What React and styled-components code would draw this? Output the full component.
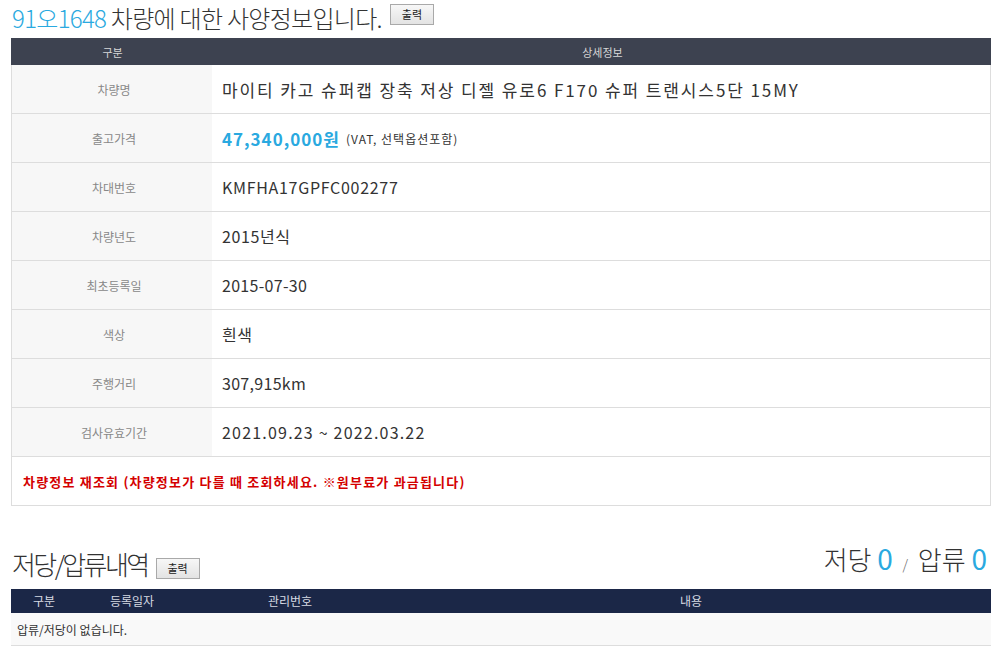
import React from "react";
import styled, { createGlobalStyle } from "styled-components";

const GlobalStyle = createGlobalStyle`
  body {
    margin: 0;
    background: #fff;
    font-family: "Noto Sans CJK KR", "Noto Sans", sans-serif;
    color: #333;
  }
`;

const specs = [
  { label: "차량명", value: "마이티 카고 슈퍼캡 장축 저상 디젤 유로6 F170 슈퍼 트랜시스5단 15MY", size: 17, ls: 1.9 },
  { label: "출고가격", price: "47,340,000원", note: "(VAT, 선택옵션포함)" },
  { label: "차대번호", value: "KMFHA17GPFC002277", ls: 0.7 },
  { label: "차량년도", value: "2015년식", ls: 0.6 },
  { label: "최초등록일", value: "2015-07-30", ls: 0.3 },
  { label: "색상", value: "흰색", ls: 0.6 },
  { label: "주행거리", value: "307,915km", ls: 0.3 },
  { label: "검사유효기간", value: "2021.09.23 ~ 2022.03.22", ls: 1.2 },
];

const Page = () => {
  return (
    <Wrapper>
      <GlobalStyle />
      <TitleRow>
        <Title>
          <Blue>91오1648</Blue> 차량에 대한 사양정보입니다.
        </Title>
        <PrintButton $top={4}>출력</PrintButton>
      </TitleRow>

      <SpecTable>
        <HeadRow>
          <HeadCell>구분</HeadCell>
          <HeadCell>상세정보</HeadCell>
        </HeadRow>
        {specs.map((row) => (
          <SpecRow key={row.label}>
            <Label>{row.label}</Label>
            <Value $size={row.size || 16} $ls={row.ls || 0}>
              {row.price ? (
                <>
                  <Price>{row.price}</Price>
                  <Note>{row.note}</Note>
                </>
              ) : (
                row.value
              )}
            </Value>
          </SpecRow>
        ))}
        <NoticeRow>차량정보 재조회 (차량정보가 다를 때 조회하세요. ※원부료가 과금됩니다)</NoticeRow>
      </SpecTable>

      <SectionHead>
        <TitleRow>
          <SubTitle>저당/압류내역</SubTitle>
          <PrintButton $top={14}>출력</PrintButton>
        </TitleRow>
        <Counts>
          저당 <Count>0</Count> <Slash>/</Slash> 압류 <Count>0</Count>
        </Counts>
      </SectionHead>

      <LienTable>
        <LienHead>
          <LienCol $w={77}>구분</LienCol>
          <LienCol $w={158}>등록일자</LienCol>
          <LienCol $w={412}>관리번호</LienCol>
          <LienCol>내용</LienCol>
        </LienHead>
        <EmptyRow>압류/저당이 없습니다.</EmptyRow>
      </LienTable>
    </Wrapper>
  );
};

const Wrapper = styled.div`
  width: 980px;
  padding: 0 11px;
`;

const TitleRow = styled.div`
  display: flex;
  align-items: flex-start;
  gap: 8px;
`;

const Title = styled.h1`
  margin: 0;
  font-size: 24px;
  font-weight: 300;
  letter-spacing: -0.7px;
  line-height: 36px;
  color: #333;
  padding-left: 1px;
`;

const Blue = styled.span`
  color: #2aa9e0;
`;

const PrintButton = styled.button`
  margin-top: ${(p) => p.$top}px;
  width: 44px;
  height: 21px;
  padding: 0;
  border: 1px solid #a9a9a9;
  background: linear-gradient(#f7f7f7, #e3e3e3);
  font-family: "Noto Sans CJK KR", sans-serif;
  font-size: 11px;
  color: #222;
  line-height: 19px;
`;

const SpecTable = styled.div`
  margin-top: 2px;
  border-left: 1px solid #ddd;
  border-right: 1px solid #ddd;
  border-bottom: 1px solid #ddd;
`;

const HeadRow = styled.div`
  display: grid;
  grid-template-columns: 203px 1fr;
  height: 27px;
  background: #3d4250;
  margin: 0 -1px;
`;

const HeadCell = styled.div`
  display: flex;
  align-items: center;
  justify-content: center;
  font-size: 11px;
  color: #d8d8d8;
`;

const SpecRow = styled.div`
  display: grid;
  grid-template-columns: 200px 1fr;
  height: 48px;
  border-bottom: 1px solid #ddd;
`;

const Label = styled.div`
  display: flex;
  align-items: center;
  justify-content: center;
  padding-left: 4px;
  background: #f7f7f7;
  font-size: 12px;
  color: #888;
`;

const Value = styled.div`
  display: flex;
  align-items: center;
  gap: 6px;
  padding-left: 10px;
  font-size: ${(p) => p.$size}px;
  letter-spacing: ${(p) => p.$ls}px;
  color: #333;
`;

const Price = styled.span`
  font-size: 17px;
  font-weight: bold;
  color: #2aa9e0;
  letter-spacing: 1px;
`;

const Note = styled.span`
  font-size: 12px;
  color: #333;
  letter-spacing: 1px;
`;

const NoticeRow = styled.div`
  height: 48px;
  display: flex;
  align-items: center;
  padding-left: 11px;
  font-size: 13px;
  font-weight: bold;
  color: #d40000;
  letter-spacing: 1.2px;
`;

const SectionHead = styled.div`
  margin-top: 32px;
  display: flex;
  justify-content: space-between;
  align-items: flex-end;
`;

const SubTitle = styled.h2`
  margin: 0;
  font-size: 26px;
  font-weight: 300;
  letter-spacing: -2.6px;
  line-height: 40px;
  color: #333;
  padding-left: 1px;
`;

const Counts = styled.div`
  font-size: 26px;
  font-weight: 300;
  color: #333;
  line-height: 40px;
  padding-right: 4px;
`;

const Count = styled.span`
  color: #2aa9e0;
  font-size: 28px;
  font-weight: 400;
`;

const Slash = styled.span`
  font-size: 14px;
  color: #666;
  margin: 0 4px;
`;

const LienTable = styled.div`
  margin-top: 5px;
`;

const LienHead = styled.div`
  display: flex;
  height: 24px;
  background: #1b2747;
  padding-left: 22px;
`;

const LienCol = styled.div`
  width: ${(p) => (p.$w ? `${p.$w}px` : "auto")};
  flex: ${(p) => (p.$w ? "none" : "1")};
  font-size: 12px;
  line-height: 24px;
  color: #d6dae3;
`;

const EmptyRow = styled.div`
  height: 32px;
  display: flex;
  align-items: center;
  padding-left: 6px;
  background: #f9f9f9;
  border-bottom: 1px solid #ddd;
  font-size: 12px;
  color: #333;
`;

export default Page;
